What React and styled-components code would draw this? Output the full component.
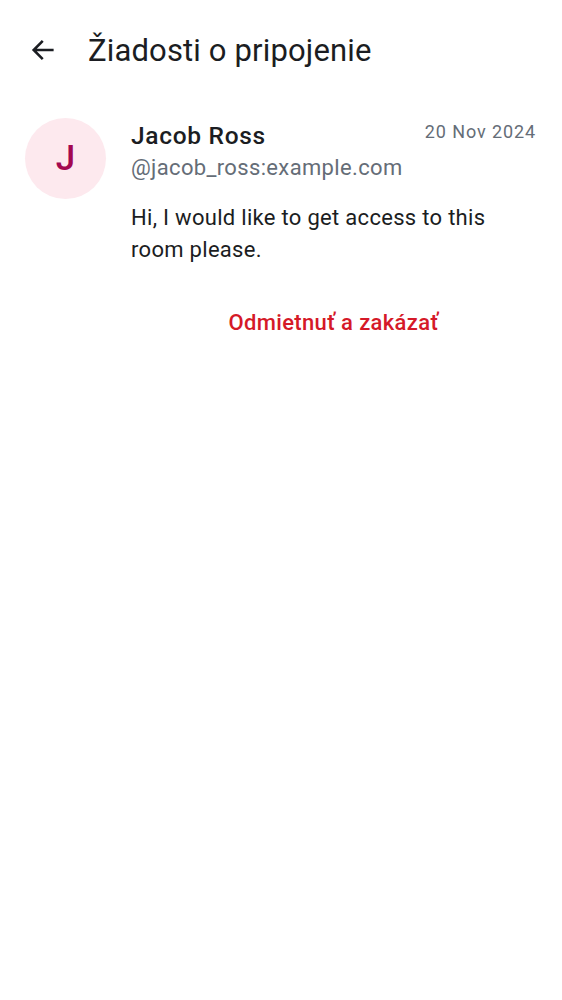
import React from 'react';
import styled, { createGlobalStyle } from 'styled-components';

const GlobalStyle = createGlobalStyle`
  html, body {
    margin: 0;
    padding: 0;
    background: #ffffff;
  }
  body {
    font-family: Roboto, "Noto Sans", sans-serif;
    color: #1b1d22;
  }
`;

const Page = styled.div`
  width: 562px;
  min-height: 1000px;
  background: #ffffff;
`;

const TopBar = styled.div`
  display: flex;
  align-items: center;
  height: 100px;
  padding-left: 28px;
  box-sizing: border-box;
`;

const BackButton = styled.button`
  display: flex;
  align-items: center;
  justify-content: center;
  width: 30px;
  height: 30px;
  padding: 0;
  border: none;
  background: none;
  color: #1b1d22;
  cursor: pointer;
`;

const Title = styled.h1`
  margin: 0 0 0 30px;
  font-size: 31px;
  font-weight: 400;
  letter-spacing: 0.15px;
  color: #1b1d22;
`;

const RequestItem = styled.div`
  display: flex;
  gap: 25px;
  padding: 18px 26px 0 25px;
`;

const Avatar = styled.div`
  flex: none;
  width: 81px;
  height: 81px;
  border-radius: 50%;
  background: #fde9ee;
  color: #a3084f;
  display: flex;
  align-items: center;
  justify-content: center;
  font-size: 35px;
  font-weight: 500;
`;

const Content = styled.div`
  flex: 1;
  display: flex;
  flex-direction: column;
`;

const HeaderRow = styled.div`
  display: flex;
  justify-content: space-between;
  align-items: flex-start;
  margin-top: 2px;
`;

const Name = styled.div`
  font-size: 24.5px;
  font-weight: 500;
  line-height: 32px;
  letter-spacing: 0.7px;
  color: #1b1d22;
`;

const Date = styled.div`
  font-size: 18px;
  line-height: 24px;
  color: #656d77;
  letter-spacing: 0.9px;
`;

const Handle = styled.div`
  font-size: 22px;
  line-height: 32px;
  letter-spacing: 0.35px;
  color: #656d77;
`;

const Message = styled.p`
  margin: 18px 0 0;
  font-size: 22px;
  line-height: 32px;
  letter-spacing: 0.3px;
  color: #1b1d22;
`;

const Actions = styled.div`
  display: flex;
  justify-content: center;
  margin-top: 44px;
`;

const DangerButton = styled.button`
  border: none;
  background: none;
  padding: 0;
  font-family: Roboto, "Noto Sans", sans-serif;
  font-size: 22px;
  font-weight: 500;
  color: #d51928;
  cursor: pointer;
  letter-spacing: 0.35px;
`;

const ArrowIcon = () => (
  <svg width="28" height="28" viewBox="0 0 24 24" fill="none">
    <path d="M20 12H4.5M11 5l-7 7 7 7" stroke="currentColor" strokeWidth="2.2" strokeLinecap="square" />
  </svg>
);

export default function App() {
  return (
    <Page>
      <GlobalStyle />
      <TopBar>
        <BackButton aria-label="Späť">
          <ArrowIcon />
        </BackButton>
        <Title>Žiadosti o pripojenie</Title>
      </TopBar>
      <RequestItem>
        <Avatar>J</Avatar>
        <Content>
          <HeaderRow>
            <Name>Jacob Ross</Name>
            <Date>20 Nov 2024</Date>
          </HeaderRow>
          <Handle>@jacob_ross:example.com</Handle>
          <Message>Hi, I would like to get access to this room please.</Message>
          <Actions>
            <DangerButton>Odmietnuť a zakázať</DangerButton>
          </Actions>
        </Content>
      </RequestItem>
    </Page>
  );
}
